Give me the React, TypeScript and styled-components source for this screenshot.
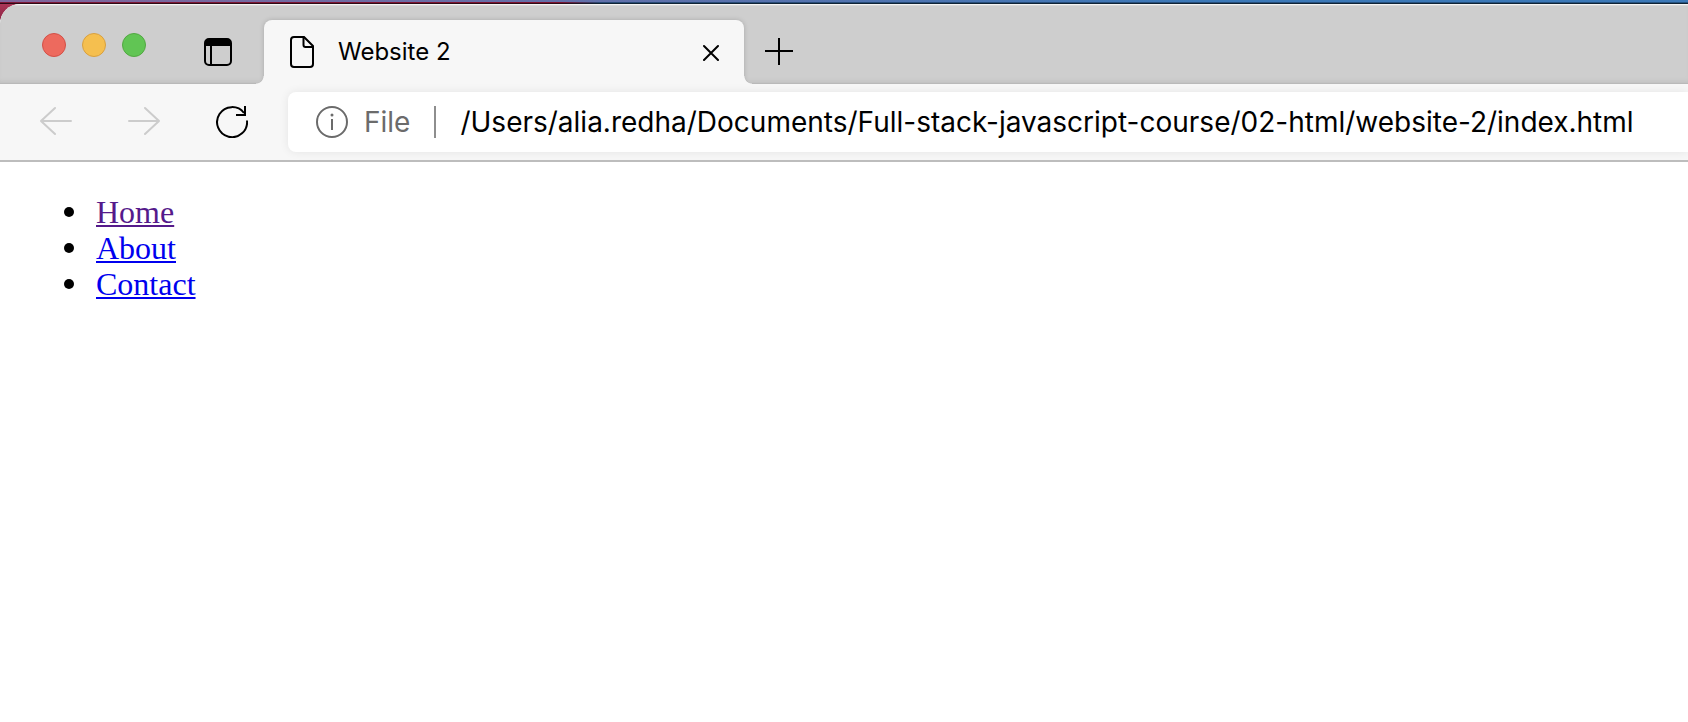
import React from "react";
import styled, { createGlobalStyle } from "styled-components";

const GlobalStyle = createGlobalStyle`
  *, *::before, *::after { box-sizing: border-box; }
  body {
    margin: 0;
    background: #ffffff;
    color: #000000;
    font-family: Inter, "Liberation Sans", sans-serif;
  }
`;

const Desktop = styled.div`
  min-height: 100vh;
  padding-top: 4px;
  background:
    linear-gradient(90deg, #81659b 0, #6170aa 600px, #3c79b8 1200px, #3c79b8 100%) 0 0 / 100% 2px no-repeat,
    linear-gradient(90deg, #7d1838 0, #7d1230 560px, #294a76 600px, #255381 100%) 0 2px / 100% 1px no-repeat,
    linear-gradient(90deg, #2e0a16 0, #2e0a16 560px, #0f2335 600px, #0f2335 100%) 0 3px / 100% 1px no-repeat,
    linear-gradient(180deg, #b23a5c 0, #8d2444 20px, #ffffff 20px);
`;

const Window = styled.main`
  border-top-left-radius: 20px;
  overflow: hidden;
  background: #ffffff;
`;

const TabStrip = styled.header`
  display: flex;
  align-items: flex-end;
  height: 80px;
  background: #cecece;
  box-shadow: inset 0 1px #f4f4f4, inset 0 2px #d9d9d9, inset 0 -1px #b9b9b9, inset 0 -5px 5px -3px #bcbcbc;
`;

const TrafficLights = styled.div`
  display: flex;
  gap: 16px;
  padding: 0 58px 27px 42px;
`;

const Light = styled.button<{ $fill: string; $edge: string }>`
  width: 24px;
  height: 24px;
  padding: 0;
  border: 1px solid ${(p) => p.$edge};
  border-radius: 50%;
  background: ${(p) => p.$fill};
`;

const IconButton = styled.button<{ $tone?: string }>`
  display: flex;
  flex: none;
  padding: 0;
  border: 0;
  background: none;
  color: ${(p) => p.$tone ?? "#000000"};
`;

const StripButton = styled(IconButton)`
  margin-bottom: 18px;
`;

const Tab = styled.div`
  position: relative;
  display: flex;
  align-items: center;
  width: 480px;
  height: 64px;
  margin: 0 21px 0 32px;
  padding: 0 24px 0 26px;
  border-radius: 8px 8px 0 0;
  background: #f7f7f7;
  box-shadow: 0 0 5px rgba(0, 0, 0, 0.18);

  &::before,
  &::after {
    content: "";
    position: absolute;
    bottom: 0;
    width: 8px;
    height: 8px;
  }
  &::before {
    right: 100%;
    background: radial-gradient(circle at 0 0, transparent 7px, #b9b9b9 7px, #f7f7f7 8px);
  }
  &::after {
    left: 100%;
    background: radial-gradient(circle at 100% 0, transparent 7px, #b9b9b9 7px, #f7f7f7 8px);
  }
`;

const TabTitle = styled.span`
  flex: 1;
  margin-left: 24px;
  font-size: 24px;
  line-height: 32px;
`;

const Toolbar = styled.nav`
  position: relative;
  z-index: 1;
  display: flex;
  align-items: center;
  height: 78px;
  padding-left: 40px;
  border-bottom: 2px solid #bdbdbd;
  background: #f7f7f7;
`;

const NavButtons = styled.div`
  display: flex;
  gap: 56px;
  margin-right: 40px;
`;

const AddressBar = styled.div`
  display: flex;
  flex: 1;
  align-items: center;
  min-width: 0;
  height: 60px;
  padding-left: 28px;
  border-radius: 8px 0 0 8px;
  background: #ffffff;
  box-shadow: 0 0 10px rgba(0, 0, 0, 0.08);
`;

const Scheme = styled.span`
  margin-left: 16px;
  padding-right: 24px;
  color: #6b6b6b;
  font-size: 28px;
  line-height: 32px;
`;

const Divider = styled.span`
  width: 2px;
  height: 32px;
  background: #8e8e8e;
`;

const Address = styled.input`
  flex: 1;
  min-width: 0;
  margin-left: 24px;
  padding: 0;
  border: 0;
  outline: 0;
  background: none;
  color: #000000;
  font-family: inherit;
  font-size: 28px;
  line-height: 36px;
`;

const LinkList = styled.ul`
  margin: 0;
  padding: 32px 16px 32px 64px;
  list-style: none;
  font-family: "Liberation Serif", serif;
  font-size: 32px;
  line-height: 36px;
`;

const LinkItem = styled.li`
  display: flex;
  align-items: center;
  gap: 22px;

  &::before {
    content: "";
    width: 10px;
    height: 10px;
    border-radius: 50%;
    background: #000000;
  }
`;

const PageLink = styled.a<{ $visited?: boolean }>`
  color: ${(p) => (p.$visited ? "#551a8b" : "#0000ee")};
  text-decoration: underline;
  text-decoration-thickness: 2px;
  text-underline-offset: 2px;
  text-decoration-skip-ink: none;
`;

const lights = [
  { name: "Close window", fill: "#ed6a5e", edge: "#d35047" },
  { name: "Minimize window", fill: "#f5bf4f", edge: "#d8a040" },
  { name: "Zoom window", fill: "#61c554", edge: "#52a842" },
];

const links = [
  { label: "Home", visited: true },
  { label: "About", visited: false },
  { label: "Contact", visited: false },
];

function Drawing({ size = 32, width = size, stroke = 2, children }: {
  size?: number;
  width?: number;
  stroke?: number;
  children: React.ReactNode;
}) {
  return (
    <svg width={width} height={size} viewBox={`0 0 ${width} ${size}`} fill="none"
      stroke="currentColor" strokeWidth={stroke} strokeLinecap="round" strokeLinejoin="round" aria-hidden="true">
      {children}
    </svg>
  );
}

export default function App() {
  return (
    <>
      <GlobalStyle />
      <Desktop>
        <Window>
          <TabStrip>
            <TrafficLights>
              {lights.map((l) => (
                <Light key={l.name} type="button" aria-label={l.name} $fill={l.fill} $edge={l.edge} />
              ))}
            </TrafficLights>
            <StripButton type="button" aria-label="Tab actions">
              <Drawing size={28}>
                <rect x="1" y="1" width="26" height="26" rx="4" />
                <path d="M1 8V5a4 4 0 0 1 4-4h18a4 4 0 0 1 4 4v3z" fill="currentColor" stroke="none" />
                <path d="M1 7h26M7 7v20" strokeLinecap="butt" />
              </Drawing>
            </StripButton>
            <Tab>
              <Drawing width={24}>
                <path d="M4 1h10l9 9v18a3 3 0 0 1-3 3H4a3 3 0 0 1-3-3V4a3 3 0 0 1 3-3z" />
                <path d="M13.500 1v8a2 2 0 0 0 2 2H23" />
              </Drawing>
              <TabTitle>Website 2</TabTitle>
              <IconButton type="button" aria-label="Close tab">
                <Drawing size={18}>
                  <path d="M2 3l14 14M16 3L2 17" />
                </Drawing>
              </IconButton>
            </Tab>
            <StripButton type="button" aria-label="New tab">
              <Drawing size={28}>
                <path d="M14 0v27M0 13h28" strokeLinecap="butt" />
              </Drawing>
            </StripButton>
          </TabStrip>
          <Toolbar>
            <NavButtons>
              <IconButton type="button" aria-label="Back" $tone="#cccccc">
                <Drawing>
                  <path d="M31 15H1M15 2L1 15l14 13" />
                </Drawing>
              </IconButton>
              <IconButton type="button" aria-label="Forward" $tone="#cccccc">
                <Drawing>
                  <path d="M1 15h30M17 2l14 13-14 13" />
                </Drawing>
              </IconButton>
              <IconButton type="button" aria-label="Reload">
                <Drawing>
                  <path d="M31 14.500A15 15 0 1 1 28 7" strokeLinecap="butt" />
                  <path d="M29 0v9h-9" strokeLinecap="butt" strokeLinejoin="miter" />
                </Drawing>
              </IconButton>
            </NavButtons>
            <AddressBar>
              <IconButton type="button" aria-label="Site information" $tone="#6b6b6b">
                <Drawing>
                  <circle cx="16" cy="16" r="15" />
                  <path d="M16 13v11" strokeLinecap="butt" />
                  <circle cx="16" cy="9" r="1.500" fill="currentColor" stroke="none" />
                </Drawing>
              </IconButton>
              <Scheme>File</Scheme>
              <Divider />
              <Address
                type="text"
                aria-label="Address"
                defaultValue="/Users/alia.redha/Documents/Full-stack-javascript-course/02-html/website-2/index.html"
              />
            </AddressBar>
          </Toolbar>
          <LinkList>
            {links.map((l) => (
              <LinkItem key={l.label}>
                <PageLink href="#" $visited={l.visited}>{l.label}</PageLink>
              </LinkItem>
            ))}
          </LinkList>
        </Window>
      </Desktop>
    </>
  );
}
